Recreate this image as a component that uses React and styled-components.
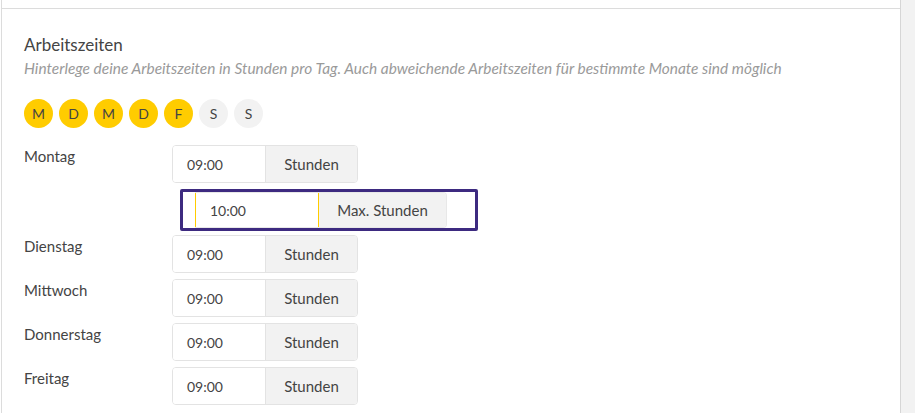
import React from "react";
import styled, { createGlobalStyle } from "styled-components";

const GlobalStyle = createGlobalStyle`
  html, body {
    margin: 0;
    padding: 0;
    background: #ffffff;
  }
  body {
    font-family: Lato, "Open Sans", sans-serif;
    color: #444;
  }
`;

const DAYS = [
  { short: "M", active: true },
  { short: "D", active: true },
  { short: "M", active: true },
  { short: "D", active: true },
  { short: "F", active: true },
  { short: "S", active: false },
  { short: "S", active: false },
];

const ROWS = [
  { label: "Dienstag", value: "09:00" },
  { label: "Mittwoch", value: "09:00" },
  { label: "Donnerstag", value: "09:00" },
  { label: "Freitag", value: "09:00" },
];

function App() {
  return (
    <Page>
      <GlobalStyle />
      <Main>
        <TopStrip />
        <Content>
          <Title>Arbeitszeiten</Title>
          <Hint>
            Hinterlege deine Arbeitszeiten in Stunden pro Tag. Auch abweichende
            Arbeitszeiten für bestimmte Monate sind möglich
          </Hint>

          <DayPicker>
            {DAYS.map((d, i) => (
              <DayBubble key={i} $active={d.active}>{d.short}</DayBubble>
            ))}
          </DayPicker>

          <Rows>
            <Row>
              <Label>Montag</Label>
              <InputGroup>
                <TimeField>09:00</TimeField>
                <Addon>Stunden</Addon>
              </InputGroup>
            </Row>

            <Highlight>
              <InputGroup>
                <TimeField $focused>10:00</TimeField>
                <Addon $wide>Max. Stunden</Addon>
              </InputGroup>
            </Highlight>

            {ROWS.map((r) => (
              <Row key={r.label}>
                <Label>{r.label}</Label>
                <InputGroup>
                  <TimeField>{r.value}</TimeField>
                  <Addon>Stunden</Addon>
                </InputGroup>
              </Row>
            ))}
          </Rows>
        </Content>
      </Main>
      <Gutter />
    </Page>
  );
}

const Page = styled.div`
  display: flex;
  height: 100vh;
  overflow: hidden;
`;

const Main = styled.div`
  flex: 1;
  margin-left: 1px;
  border-left: 1px solid #dcdcdc;
  display: flex;
  flex-direction: column;
`;

const TopStrip = styled.div`
  height: 8px;
  border-bottom: 1px solid #dcdcdc;
`;

const Content = styled.div`
  padding: 25px 0 0 22px;
`;

const Title = styled.h3`
  margin: 0;
  font-size: 17px;
  font-weight: 400;
  line-height: 22px;
  color: #444;
`;

const Hint = styled.p`
  margin: 2px 0 0;
  font-size: 15.45px;
  font-style: italic;
  line-height: 20px;
  color: #9a9a9a;
`;

const DayPicker = styled.div`
  display: flex;
  gap: 6px;
  margin-top: 21px;
`;

const DayBubble = styled.div`
  width: 29px;
  height: 29px;
  border-radius: 50%;
  display: flex;
  align-items: center;
  justify-content: center;
  font-size: 14px;
  color: #444;
  background: ${(p) => (p.$active ? "#ffcc00" : "#f2f2f2")};
`;

const Rows = styled.div`
  display: flex;
  flex-direction: column;
  gap: 6px;
  margin-top: 17px;
`;

const Row = styled.div`
  display: flex;
  align-items: flex-start;
`;

const Label = styled.div`
  width: 148px;
  font-size: 15px;
  line-height: 20px;
  padding-top: 1px;
  color: #444;
`;

const InputGroup = styled.div`
  display: flex;
  height: 38px;
  border: 1px solid #e3e3e3;
  border-radius: 4px;
  overflow: hidden;
  box-sizing: border-box;
`;

const TimeField = styled.div`
  width: ${(p) => (p.$focused ? "124px" : "93px")};
  box-sizing: border-box;
  display: flex;
  align-items: center;
  padding-left: 14px;
  font-size: 14px;
  color: #444;
  background: #fff;
  border-left: ${(p) => (p.$focused ? "1px solid #ffcc00" : "none")};
  border-right: 1px solid ${(p) => (p.$focused ? "#ffcc00" : "#e3e3e3")};
`;

const Addon = styled.div`
  width: ${(p) => (p.$wide ? "127px" : "91px")};
  display: flex;
  align-items: center;
  justify-content: center;
  font-size: 15px;
  color: #444;
  background: #f2f2f2;
`;

const Highlight = styled.div`
  align-self: flex-start;
  margin: 0 0 -2px 156px;
  width: 298px;
  height: 42px;
  box-sizing: border-box;
  border: 3px solid #3d2a80;
  border-radius: 2px;
  padding: 0 0 0 12px;
  display: flex;
  align-items: center;

  ${InputGroup} {
    height: 36px;
    border-color: #e8e8e8;
    border-left: none;
    border-radius: 0 4px 4px 0;
  }
`;

const Gutter = styled.div`
  width: 14px;
  background: #f2f2f2;
  border-left: 1px solid #d6d6d6;
`;

export default App;
